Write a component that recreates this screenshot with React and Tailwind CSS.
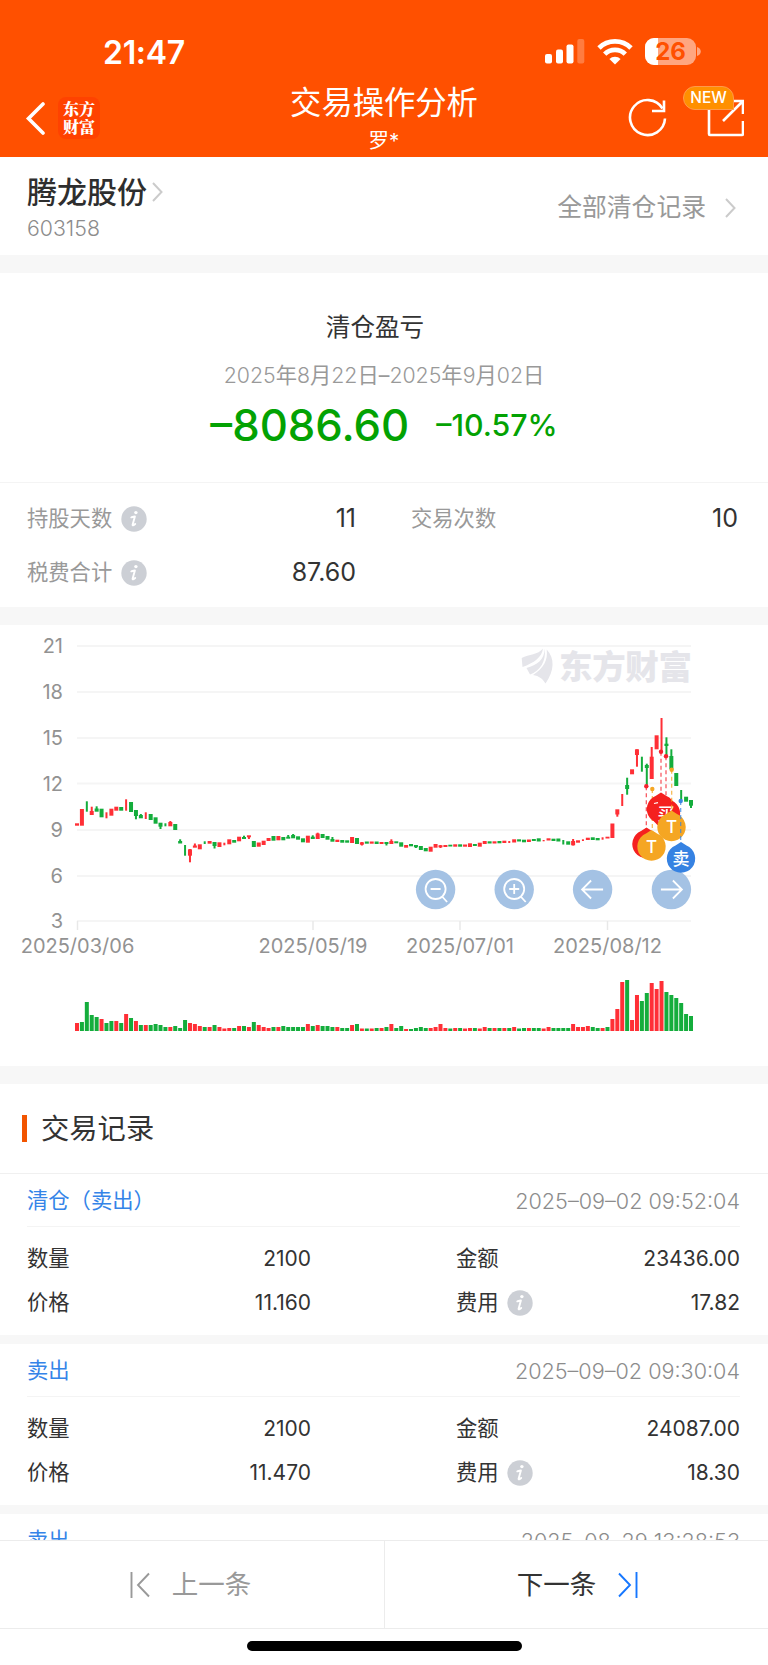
import React from "react";

const UP = "#ff2f36";
const DOWN = "#14ad3c";

// One entry per trading day: direction, body top, body bottom, wick top, wick bottom, volume.
// Values are already in plot units (y), 0 means that the part is not drawn.
// The last item gives the volume bar's direction where it is not the candle's.
const days = [
  ["r", 823.3, 825.7, 0, 0, 8],
  ["r", 809, 825.7, 0, 0, 9, "g"],
  ["g", 0, 0, 801.3, 811.7, 29],
  ["r", 811, 815, 806.7, 813, 16, "g"],
  ["g", 808.5, 811.7, 806.3, 810, 14],
  ["g", 808.7, 817.3, 0, 0, 12, "r"],
  ["r", 0, 0, 812.3, 818.3, 8, "g"],
  ["r", 808.7, 815.7, 0, 0, 10, "g"],
  ["r", 806.7, 810.7, 0, 0, 10],
  ["g", 807, 810.7, 0, 0, 8],
  ["r", 0, 0, 799.3, 810.7, 17],
  ["g", 802, 812, 0, 0, 13],
  ["g", 810, 816, 810, 819.3, 10, "r"],
  ["g", 815, 818.3, 814, 817, 6],
  ["r", 0, 0, 812.3, 819, 6],
  ["g", 814, 820, 0, 0, 6],
  ["g", 817.3, 823.7, 0, 0, 7],
  ["g", 822.7, 826.7, 823, 829, 6],
  ["g", 0, 0, 823.3, 826.3, 4],
  ["r", 822, 826.3, 821, 824, 4],
  ["g", 824, 830, 0, 0, 5],
  ["g", 841, 843.5, 839.3, 842, 3],
  ["g", 0, 0, 845, 855.7, 11],
  ["r", 849.3, 855.7, 849, 862.3, 8],
  ["r", 845.5, 847.7, 843.5, 847, 7],
  ["r", 844.3, 849.3, 0, 0, 5],
  ["g", 0, 0, 841.3, 844, 4],
  ["r", 841, 843.7, 0, 0, 4],
  ["g", 842, 846, 842, 848.5, 6],
  ["r", 842.3, 847, 0, 0, 4],
  ["r", 0, 0, 842.7, 845.3, 2.5],
  ["r", 839.3, 844.3, 0, 0, 3],
  ["g", 840, 842.7, 0, 0, 3],
  ["r", 836.7, 841.3, 0, 0, 5],
  ["g", 837, 839, 835.7, 838, 5],
  ["r", 835.3, 837.3, 836, 839, 4],
  ["g", 841, 847, 0, 0, 9],
  ["r", 842.5, 846.7, 0, 0, 6],
  ["r", 840.7, 845, 0, 0, 4],
  ["r", 838, 841, 0, 0, 3],
  ["g", 836, 840.7, 0, 0, 4],
  ["r", 836, 840.3, 0, 0, 4],
  ["g", 837, 840.3, 0, 0, 5],
  ["g", 836.7, 838.7, 835, 838, 4],
  ["g", 835, 838.3, 834, 837, 4],
  ["g", 836.3, 839.7, 0, 0, 4],
  ["g", 838.3, 842.3, 0, 0, 4],
  ["r", 835.7, 842.7, 0, 0, 7],
  ["g", 836.7, 839, 835.3, 838, 5],
  ["r", 833.5, 839, 832.7, 838, 6],
  ["g", 834, 838, 0, 0, 5],
  ["g", 836, 839.7, 0, 0, 5],
  ["g", 839, 841.7, 837, 841, 4],
  ["r", 839.7, 842, 0, 0, 4],
  ["g", 840, 842.7, 0, 0, 3],
  ["g", 840.3, 842.7, 0, 0, 3],
  ["r", 837, 843, 0, 0, 6],
  ["g", 838, 844, 0, 0, 7],
  ["r", 842.3, 844.7, 842, 845.5, 2.5],
  ["g", 841.5, 843.7, 0, 0, 2.5],
  ["r", 841.5, 843.7, 0, 0, 2.5],
  ["g", 841.5, 844, 0, 0, 3],
  ["r", 842, 844, 0, 0, 3],
  ["g", 842, 844, 842, 845.5, 4],
  ["r", 841, 844, 839.3, 843, 7],
  ["g", 841.3, 843.3, 0, 0, 3],
  ["g", 842.3, 846.7, 0, 0, 5],
  ["r", 845, 847.7, 0, 0, 2],
  ["g", 844, 846.3, 0, 0, 2],
  ["g", 845, 847.3, 845, 848, 3],
  ["g", 846, 850, 0, 0, 4],
  ["g", 848, 851.3, 0, 0, 3],
  ["r", 846.7, 851.7, 0, 0, 3],
  ["r", 844, 847.7, 0, 0, 4],
  ["r", 845.3, 847.3, 845, 848, 7],
  ["r", 845, 847, 0, 0, 3],
  ["g", 844.7, 846.5, 0, 0, 2.5],
  ["r", 844.3, 846.7, 0, 0, 3],
  ["g", 844.3, 846.7, 0, 0, 3],
  ["r", 844.5, 846.7, 0, 0, 2.5],
  ["r", 843.3, 847, 0, 0, 3],
  ["g", 844, 846, 0, 0, 3],
  ["r", 842.7, 846.7, 0, 0, 2.5],
  ["r", 841, 844, 0, 0, 4],
  ["g", 841.3, 843.5, 0, 0, 3],
  ["r", 841.3, 843.5, 0, 0, 3],
  ["g", 841, 843.3, 0, 0, 3],
  ["r", 840.7, 843, 0, 0, 3],
  ["r", 0, 0, 841, 843, 3, "g"],
  ["r", 839.3, 842.5, 0, 0, 4],
  ["g", 839.3, 841.5, 0, 0, 2.5],
  ["g", 839.7, 842.3, 0, 0, 3],
  ["r", 839.5, 842, 0, 0, 3],
  ["g", 839, 841, 0, 0, 3],
  ["g", 838.3, 841.5, 0, 0, 3],
  ["r", 0, 0, 840, 841.3, 2.5],
  ["r", 838.3, 840.5, 0, 0, 4],
  ["g", 838.7, 841, 0, 0, 3],
  ["g", 838.5, 841.5, 0, 0, 3],
  ["g", 0, 0, 840, 844.5, 3],
  ["g", 841.3, 844.7, 0, 0, 3],
  ["r", 841, 845.3, 839, 845.5, 7],
  ["r", 840.3, 842.7, 0, 0, 4],
  ["r", 0, 0, 839.3, 841, 4],
  ["r", 837.7, 840, 0, 0, 5],
  ["g", 837.3, 840, 0, 0, 4],
  ["g", 838, 840.3, 0, 0, 3],
  ["r", 0, 0, 837.3, 839.7, 3],
  ["r", 836.7, 838.5, 0, 0, 4, "g"],
  ["r", 823.5, 838, 0, 0, 12],
  ["r", 809.3, 814.5, 810, 816.7, 22],
  ["r", 0, 0, 794, 806, 49],
  ["g", 785, 789, 777.7, 794.7, 51],
  ["r", 769.3, 774.3, 0, 0, 11],
  ["r", 749.3, 755, 749.3, 766.7, 36],
  ["g", 0, 0, 756.7, 771.7, 30],
  ["g", 765, 768, 763.7, 786.7, 38],
  ["r", 756.7, 779, 747, 779, 48],
  ["r", 735.3, 749.3, 0, 0, 42],
  ["r", 0, 0, 718, 751.7, 50],
  ["g", 743.7, 746, 737.3, 756.7, 39],
  ["g", 756, 769.3, 749.3, 769, 36],
  ["g", 773, 786, 0, 0, 33],
  ["g", 0, 0, 790, 801, 28],
  ["g", 796.7, 801.7, 0, 0, 17],
  ["g", 800, 805.7, 800, 808, 15],
];

const yAxis = [
  { label: "21", y: 646 },
  { label: "18", y: 692 },
  { label: "15", y: 738 },
  { label: "12", y: 783.5 },
  { label: "9", y: 830 },
  { label: "6", y: 876 },
  { label: "3", y: 921 },
];

const xAxis = [
  { label: "2025/03/06", x: 77.5 },
  { label: "2025/05/19", x: 313 },
  { label: "2025/07/01", x: 460 },
  { label: "2025/08/12", x: 607.5 },
];

const records = [
  {
    type: "清仓（卖出）",
    time: "2025–09–02 09:52:04",
    count: "2100",
    amount: "23436.00",
    price: "11.160",
    fee: "17.82",
  },
  {
    type: "卖出",
    time: "2025–09–02 09:30:04",
    count: "2100",
    amount: "24087.00",
    price: "11.470",
    fee: "18.30",
  },
  { type: "卖出", time: "2025–08–29 13:28:53" },
];

const Chevron = ({ className }) => (
  <svg className={className} viewBox="0 0 11 20" fill="none" stroke="#cbcbcb" strokeWidth="2">
    <path d="M1 1l8.500 9L1 19" />
  </svg>
);

const InfoIcon = () => (
  <svg className="h-[26px] w-[26px] shrink-0" viewBox="0 0 26 26">
    <circle cx="13" cy="13" r="12.700" fill="#cccfd5" />
    <circle cx="14.900" cy="6.600" r="1.700" fill="#fff" />
    <path
      d="M10.300 11.400c1-.3 2.200-.7 3.600-.9l-2.300 8.200c-.2.9.9.8 2.600-.7"
      fill="none"
      stroke="#fff"
      strokeWidth="1.900"
      strokeLinecap="round"
      strokeLinejoin="round"
    />
  </svg>
);

const StatusBar = () => (
  <div className="flex h-[78px] items-start justify-between pt-[33px] pl-[103px] pr-[67px]">
    <span className="text-[32px] leading-10 font-semibold tracking-[-0.3px]">21:47</span>
    <div className="flex items-center pt-[5px]">
      <svg className="h-[25px] w-10" viewBox="0 0 40 25" fill="#fff">
        <rect x="0" y="15" width="7" height="9.500" rx="2" />
        <rect x="11" y="10.500" width="7" height="14" rx="2" />
        <rect x="21.500" y="5.500" width="7" height="19" rx="2" />
        <rect x="32.300" y="0" width="7" height="24.500" rx="2" opacity=".25" />
      </svg>
      <svg className="ml-3 h-[26px] w-[36px]" viewBox="0 0 36 26" fill="none" stroke="#fff" strokeWidth="4.800">
        <path d="M2 9a22.800 22.800 0 0 1 32 0" />
        <path d="M7.700 15.100a14.800 14.800 0 0 1 20.600 0" />
        <path d="M12.400 20a7.900 7.900 0 0 1 11.200 0L18 25.500z" fill="#fff" stroke="none" />
      </svg>
      <div className="relative ml-3 flex h-[27px] w-[51px] items-center justify-center overflow-hidden rounded-[9px] bg-[#ffa680]">
        <div className="absolute inset-y-0 left-0 w-[13px] bg-white" />
        <span className="relative text-[24px] leading-none font-bold text-[#ff5000]">26</span>
      </div>
      <svg className="ml-[1px] h-[9px] w-1" viewBox="0 0 4 9" fill="#ffa680">
        <path d="M0 0c5 1.500 5 7.500 0 9z" />
      </svg>
    </div>
  </div>
);

const Header = () => (
  <header className="h-[157px] bg-[#ff5000] text-white">
    <StatusBar />
    <div className="grid h-[79px] grid-cols-[1fr_auto_1fr] items-start">
      <div className="flex items-center pt-[19px] pl-[25px]">
        <svg className="h-[34px] w-5" viewBox="0 0 20 34" fill="none" stroke="#fff" strokeWidth="3.600">
          <path d="M18 3L3.500 17.500 18 32" strokeLinecap="round" />
        </svg>
        <div className="ml-[13px] flex h-[42px] w-[42px] flex-col items-center justify-center rounded-[8px] bg-[#ff4200] font-['Noto_Serif_CJK_SC','Noto_Sans_CJK_SC',serif] text-[16px] leading-[18px] font-black">
          <span>东方</span>
          <span>财富</span>
        </div>
      </div>
      <div className="flex flex-col items-center pt-[6px]">
        <h1 className="text-[31.300px] leading-[38px]">交易操作分析</h1>
        <p className="text-[20.500px] leading-[38px]">罗*</p>
      </div>
      <div className="flex justify-end pt-[19px] pr-[24px]">
        <svg className="mr-[37px] h-10 w-10" viewBox="0 0 40 40" fill="none" stroke="#fff" strokeWidth="2.600">
          <path d="M38 21.500A17.500 17.500 0 1 1 35.500 11.500" />
          <path d="M37 3.500V14H25" />
        </svg>
        <div className="relative">
          <svg className="h-10 w-10" viewBox="0 0 40 40" fill="none" stroke="#fff" strokeWidth="2.600">
            <path d="M20 4H7a2 2 0 0 0-2 2v31a1 1 0 0 0 1 1h32a1 1 0 0 0 1-1V24" />
            <path d="M25 4h14v13M39 4L19 24" />
          </svg>
          <span className="absolute -top-[11px] -left-[21px] flex h-6 w-[51px] items-center justify-center rounded-[12px] rounded-br-none border border-[#ff9a4a] bg-[#ff9000] text-[15.500px] leading-none font-medium">
            NEW
          </span>
        </div>
      </div>
    </div>
  </header>
);

const StockBar = () => (
  <section className="flex h-[98px] shrink-0 items-center justify-between pt-[3px] pr-8 pl-[27px]">
    <div>
      <div className="flex items-center">
        <h2 className="text-[30px] leading-[40px] font-medium text-[#2e2e2e]">腾龙股份</h2>
        <Chevron className="ml-[5px] h-5 w-[11px]" />
      </div>
      <p className="text-[21.300px] leading-8 font-light text-[#8c8c8c]">603158</p>
    </div>
    <div className="flex items-center text-[24.800px] text-[#999]">
      <span>全部清仓记录</span>
      <Chevron className="ml-[19px] h-5 w-[11px]" />
    </div>
  </section>
);

const Summary = () => (
  <section className="shrink-0">
    <div className="flex h-[210px] flex-col items-center border-b border-[#f4f4f4]">
      <h3 className="mt-9 pr-[18px] text-[24.600px] leading-9 text-[#333]">清仓盈亏</h3>
      <p className="mt-[14px] text-[21.300px] leading-8 text-[#999]">
        <span className="font-light">2025</span>年<span className="font-light">8</span>月
        <span className="font-light">22</span>日–<span className="font-light">2025</span>年
        <span className="font-light">9</span>月<span className="font-light">02</span>日
      </p>
      <div className="mt-[3px] flex items-center text-[#03a203]">
        <span className="text-[43.700px] leading-[64px] font-medium">–8086.60</span>
        <span className="ml-[27px] text-[30.300px] font-medium">–10.57%</span>
      </div>
    </div>
    <div className="grid h-[124px] grid-cols-[329px_327px] content-start gap-x-[55px] pt-[9px] pl-[27px] text-[21.300px] text-[#999]">
      <div className="flex h-[54px] items-center">
        <span>持股天数</span>
        <span className="ml-[9px]">
          <InfoIcon />
        </span>
        <span className="ml-auto text-[25px] text-[#333]">11</span>
      </div>
      <div className="flex h-[54px] items-center">
        <span>交易次数</span>
        <span className="ml-auto text-[25px] text-[#333]">10</span>
      </div>
      <div className="flex h-[54px] items-center">
        <span>税费合计</span>
        <span className="ml-[9px]">
          <InfoIcon />
        </span>
        <span className="ml-auto text-[25px] text-[#333]">87.60</span>
      </div>
    </div>
  </section>
);

const Pin = ({ x, y, color, text }) => (
  <g transform={`translate(${x} ${y})`}>
    <path d="M0-16.500L5.500-13A14.200 14.200 0 1 1-5.500-13z" fill={color} strokeLinejoin="round" />
    {text && (
      <text y="6" textAnchor="middle" fontSize="17" fontWeight="500" fill="#fff">
        {text}
      </text>
    )}
  </g>
);

const Tracer = ({ x, y, to, color }) => (
  <g>
    <path d={`M${x} ${y}V${to}`} stroke={color} strokeWidth="1.200" strokeDasharray="4 3" opacity=".8" />
    <circle cx={x} cy={y} r="2.200" fill={color} />
  </g>
);

const RoundButton = ({ x, children }) => (
  <g transform={`translate(${x} 889.500)`} fill="none" stroke="#fff" strokeWidth="1.800">
    <circle r="19.700" fill="#a4c2e4" stroke="none" />
    {children}
  </g>
);

const TradeChart = () => (
  <section className="h-[441px] shrink-0">
    <svg className="block h-[441px] w-full" viewBox="0 625 768 441">
      {yAxis.map((tick) => (
        <g key={tick.label}>
          <path d={`M77 ${tick.y}H691`} stroke="#f5f5f5" strokeWidth="1.800" />
          <text x="63" y={tick.y + 7} textAnchor="end" fontSize="20" fill="#929292">
            {tick.label}
          </text>
        </g>
      ))}
      {xAxis.map((tick) => (
        <g key={tick.label}>
          <path d={`M${tick.x} 921v9`} stroke="#e8e8e8" strokeWidth="1.500" />
          <text x={tick.x} y="953" textAnchor="middle" fontSize="20" fill="#929292">
            {tick.label}
          </text>
        </g>
      ))}

      {/* watermark */}
      <g fill="#e5e5ea">
        <path d="M521.700 658C529 654 538 655 543 648.500C542 657 534 663 522.500 667z" />
        <path d="M544.700 648.500C544.500 660 537 665 526.500 668L530 674.500C540 671 546.500 661 544.700 648.500z" />
        <path d="M546.700 649.500C548 660 544 668 533 675C539 676 543 679 545.500 683.500C554.500 671 555 658 546.700 649.500z" />
        <text x="559" y="678.500" fontSize="33.500" fontWeight="900" textLength="133">
          东方财富
        </text>
      </g>

      {days.map(([dir, top, bottom, high, low, volume, volumeDir], i) => {
        const x = 77 + i * 4.912;
        const color = dir === "r" ? UP : DOWN;
        return (
          <g key={i}>
            {top > 0 && <rect x={x - 2} y={top} width="4" height={bottom - top} fill={color} />}
            {high > 0 && <rect x={x - 1} y={high} width="2" height={low - high} fill={color} />}
            <rect
              x={x - 2}
              y={1031 - volume}
              width="4"
              height={volume}
              fill={(volumeDir || dir) === "r" ? UP : DOWN}
            />
          </g>
        );
      })}

      <RoundButton x={435.600}>
        <circle cx="0" cy="-.5" r="10" />
        <path d="M-5-.5H5M6.500 7l5 5.500" />
      </RoundButton>
      <RoundButton x={514.200}>
        <circle cx="0" cy="-.5" r="10" />
        <path d="M-5-.5H5M0-5.500v10M6.500 7l5 5.500" />
      </RoundButton>
      <RoundButton x={592.600}>
        <path d="M10.500 0h-21M-1.500-9l-9 9 9 9" />
      </RoundButton>
      <RoundButton x={671.400}>
        <path d="M-10.500 0h21M1.500-9l9 9-9 9" />
      </RoundButton>

      <Tracer x={646.300} y={786.300} to={830} color="#f5222d" />
      <Tracer x={652.300} y={789} to={832} color="#f5a623" />
      <Tracer x={661} y={751.700} to={795} color="#f5222d" />
      <Tracer x={666} y={756.300} to={800} color="#f5222d" />
      <Pin x={661} y={809} color="#f5201f" />
      <Pin x={666} y={813.500} color="#f5201f" text="买" />
      <path d="M654 803.500l4-.8" stroke="#fff" strokeWidth="1.200" />
      <Tracer x={671.700} y={769.700} to={812} color="#f5a623" />
      <Pin x={671.500} y={827} color="#f5a623" text="T" />
      <Pin x={646.500} y={844} color="#f5201f" />
      <Pin x={651.500} y={846.500} color="#f5a623" text="T" />
      <Tracer x={680.700} y={801} to={843} color="#3a86e0" />
      <Pin x={681} y={858.500} color="#3682e2" text="卖" />
    </svg>
  </section>
);

const RecordItem = ({ record }) => (
  <article className="h-[170px] border-b-[9px] border-[#f7f7f7] pr-7 pl-[27px] text-[21.300px] text-[#333]">
    <div className="flex h-[53px] items-center justify-between border-b border-[#f4f4f4] pt-[2px]">
      <span className="text-[#3484e8]">{record.type}</span>
      <span className="text-[21.600px] font-light text-[#8c8c8c]">{record.time}</span>
    </div>
    {record.count && (
      <div className="grid grid-cols-[284px_284px] justify-between pt-[9px]">
        <div className="flex h-[45px] items-center justify-between">
          <span>数量</span>
          <span className="text-[21px]">{record.count}</span>
        </div>
        <div className="flex h-[45px] items-center justify-between">
          <span>金额</span>
          <span className="text-[21px]">{record.amount}</span>
        </div>
        <div className="flex h-11 items-center justify-between">
          <span>价格</span>
          <span className="text-[21px]">{record.price}</span>
        </div>
        <div className="flex h-11 items-center">
          <span className="mr-2">费用</span>
          <InfoIcon />
          <span className="ml-auto text-[21px]">{record.fee}</span>
        </div>
      </div>
    )}
  </article>
);

const Footer = () => (
  <footer className="h-[125px] shrink-0 bg-white">
    <div className="grid h-[89px] grid-cols-2 border-y border-[#ececec] text-[26.500px]">
      <button className="flex items-center justify-center pr-[3px] text-[#999]">
        <svg className="mr-[22px] h-[26px] w-5" viewBox="0 0 20 26" fill="none" stroke="currentColor" strokeWidth="1.900">
          <path d="M1.500 0v26M19 1.500L8 13l11 11.500" />
        </svg>
        <span>上一条</span>
      </button>
      <button className="flex items-center justify-center border-l border-[#ececec] pl-[2px] text-[#333]">
        <span>下一条</span>
        <svg className="ml-[22px] h-[26px] w-5" viewBox="0 0 20 26" fill="none" stroke="#1677ff" strokeWidth="1.900">
          <path d="M18.500 0v26M1 1.500L12 13 1 24.500" />
        </svg>
      </button>
    </div>
    <div className="mx-auto mt-3 h-[10px] w-[275px] rounded-full bg-black" />
  </footer>
);

const App = () => {
  return (
    <div className="flex h-[1665px] w-[768px] flex-col overflow-hidden bg-white font-['Inter','Noto_Sans_CJK_SC',sans-serif]">
      <Header />
      <StockBar />
      <div className="h-[18px] shrink-0 bg-[#f7f7f7]" />
      <Summary />
      <div className="h-[18px] shrink-0 bg-[#f7f7f7]" />
      <TradeChart />
      <div className="h-[18px] shrink-0 bg-[#f7f7f7]" />
      <div className="flex h-[90px] shrink-0 items-center border-b border-[#f0f0f0] pl-[22px]">
        <span className="h-[27px] w-[5px] bg-[#f25500]" />
        <h3 className="ml-[14px] pt-[2px] text-[28.300px] text-[#333]">交易记录</h3>
      </div>
      <div className="min-h-0 flex-1 overflow-hidden">
        {records.map((record) => (
          <RecordItem key={record.time} record={record} />
        ))}
      </div>
      <Footer />
    </div>
  );
};

export default App;
